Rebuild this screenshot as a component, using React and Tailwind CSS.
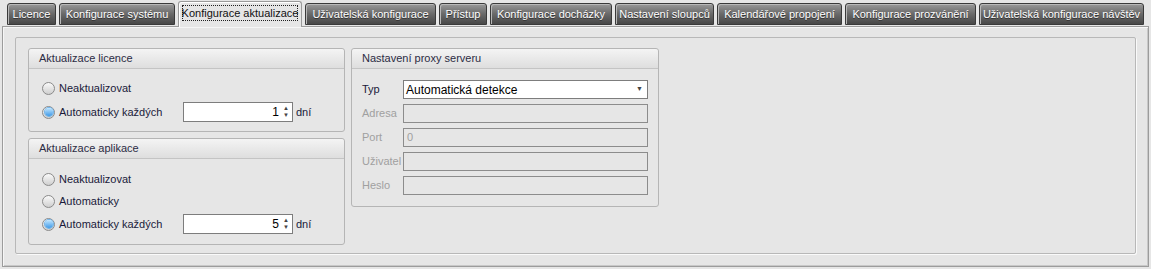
import React from 'react';

const tabs = [
  { label: 'Licence', w: 49 },
  { label: 'Konfigurace systému', w: 116 },
  { label: 'Konfigurace aktualizace', w: 124, active: true },
  { label: 'Uživatelská konfigurace', w: 131 },
  { label: 'Přístup', w: 48 },
  { label: 'Konfigurace docházky', w: 122 },
  { label: 'Nastavení sloupců', w: 99 },
  { label: 'Kalendářové propojení', w: 125 },
  { label: 'Konfigurace prozvánění', w: 131 },
  { label: 'Uživatelská konfigurace návštěv', w: 165 },
];

function Tab({ label, w, active }) {
  if (active) {
    return (
      <div
        style={{ width: w }}
        className="relative z-10 -mb-px h-[26px] shrink-0 rounded-t-[3px] border border-b-0 border-[#9a9a9a] bg-[#e6e6e6] px-[3px] pt-[3px] shadow-[inset_1px_1px_0_#fff]"
      >
        <div className="flex h-[16px] items-center justify-center whitespace-nowrap border border-dotted border-[#222] text-[11px] leading-none text-[#111]">
          {label}
        </div>
      </div>
    );
  }
  return (
    <div
      style={{ width: w }}
      className="mb-px flex h-[22px] shrink-0 items-center justify-center whitespace-nowrap rounded-t-[3px] border border-[#3a3a3a] bg-gradient-to-b from-[#9a9a9a] via-[#696969] to-[#484848] text-[11px] leading-none text-white shadow-[inset_1px_1px_0_#b8b8b8] [text-shadow:0_1px_0_#333]"
    >
      {label}
    </div>
  );
}

function Group({ title, className, children }) {
  return (
    <div className={`rounded-[3px] border border-[#b5b5b5] bg-[#e6e6e6] ${className}`}>
      <div className="flex h-[20px] items-center rounded-t-[3px] border-b border-[#c4c4c4] bg-gradient-to-b from-[#f4f4f4] to-[#dedede] pl-[10px] text-[11px] text-[#2c2c44]">
        {title}
      </div>
      {children}
    </div>
  );
}

function Dot({ checked }) {
  return (
    <span className="flex h-[13px] w-[13px] items-center justify-center rounded-full border border-[#8a8a8a] bg-gradient-to-b from-[#fafafa] to-[#cfcfcf]">
      {checked && (
        <span className="h-[8px] w-[8px] rounded-full bg-gradient-to-b from-[#bfe6ff] to-[#3c9ae6] shadow-[0_0_0_1px_#6fb2e8]" />
      )}
    </span>
  );
}

function Radio({ label }) {
  return (
    <div className="flex h-[20px] items-center gap-[4px] pl-[13px] text-[11px] text-[#1a1a3a]">
      <Dot />
      <span className="whitespace-nowrap">{label}</span>
    </div>
  );
}

function SpinRow({ label, value }) {
  return (
    <div className="flex h-[20px] items-center text-[11px] text-[#1a1a3a]">
      <div className="flex items-center gap-[4px] pl-[13px]">
        <Dot checked />
        <span className="w-[124px] whitespace-nowrap">{label}</span>
      </div>
      <div className="flex h-[20px] w-[110px] items-center justify-end border border-[#7d7d7d] bg-white pr-[3px]">
        <span className="pr-[4px] text-[12px] text-black">{value}</span>
        <span className="flex flex-col items-center text-[6px] leading-[7px] text-[#444]">
          <span>▲</span>
          <span>▼</span>
        </span>
      </div>
      <span className="pl-[3px]">dní</span>
    </div>
  );
}

function Field({ label, children }) {
  return (
    <div className="flex h-[19px] items-center">
      <span className="w-[41px] whitespace-nowrap text-[11px] text-[#a0a0a0]">{label}</span>
      {children}
    </div>
  );
}

function Disabled({ value }) {
  return (
    <div className="flex h-[19px] w-[245px] items-center border border-[#8c8c8c] bg-[#e6e6e6] pl-[3px] text-[11px] text-[#a0a0a0]">
      {value}
    </div>
  );
}

export default function App() {
  return (
    <div className="h-[269px] w-[1151px] overflow-hidden bg-[#e6e6e6] pt-[2px] font-['Liberation_Sans',Arial,sans-serif]">
      <div className="flex h-[24px] items-end gap-[3px] pl-[7px]">
        {tabs.map((t) => (
          <Tab key={t.label} {...t} />
        ))}
      </div>

      <div className="ml-[2px] h-[241px] w-[1147px] border border-[#9c9c9c] bg-[#e6e6e6] px-[12px] pb-[12px] pt-[10px] shadow-[inset_1px_1px_0_#f6f6f6,inset_-1px_-1px_0_#c8c8c8]">
        <div className="flex h-[217px] gap-[6px] rounded-[2px] border border-[#b8b8b8] pl-[12px] pt-[10px] shadow-[1px_1px_0_#fafafa]">
          <div className="flex w-[317px] flex-col gap-[6px]">
            <Group title="Aktualizace licence" className="h-[84px]">
              <div className="flex flex-col gap-[4px] pt-[9px]">
                <Radio label="Neaktualizovat" />
                <SpinRow label="Automaticky každých" value="1" />
              </div>
            </Group>
            <Group title="Aktualizace aplikace" className="h-[107px]">
              <div className="flex flex-col gap-[2px] pt-[10px]">
                <Radio label="Neaktualizovat" />
                <Radio label="Automaticky" />
                <div className="pt-[1px]">
                  <SpinRow label="Automaticky každých" value="5" />
                </div>
              </div>
            </Group>
          </div>

          <Group title="Nastavení proxy serveru" className="h-[159px] w-[308px]">
            <div className="flex flex-col gap-[5px] pl-[10px] pt-[11px]">
              <div className="flex h-[19px] items-center">
                <span className="w-[41px] text-[11px] text-[#1a1a3a]">Typ</span>
                <div className="flex h-[19px] w-[245px] items-center justify-between border border-[#7d7d7d] bg-white pl-[2px] pr-[4px] text-[12px] text-black">
                  <span>Automatická detekce</span>
                  <span className="text-[7px] text-[#444]">▼</span>
                </div>
              </div>
              <Field label="Adresa">
                <Disabled value="" />
              </Field>
              <Field label="Port">
                <Disabled value="0" />
              </Field>
              <Field label="Uživatel">
                <Disabled value="" />
              </Field>
              <Field label="Heslo">
                <Disabled value="" />
              </Field>
            </div>
          </Group>
        </div>
      </div>
    </div>
  );
}
